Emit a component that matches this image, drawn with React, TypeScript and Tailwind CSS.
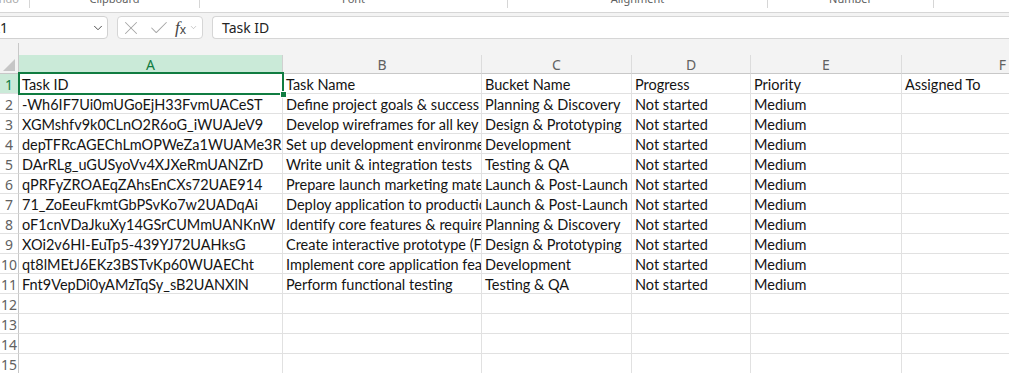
import { Check, ChevronDown, X } from "lucide-react"

const rows = [
  ["Task ID", "Task Name", "Bucket Name", "Progress", "Priority", "Assigned To"],
  ["-Wh6IF7Ui0mUGoEjH33FvmUACeST", "Define project goals & success criteria", "Planning & Discovery", "Not started", "Medium", ""],
  ["XGMshfv9k0CLnO2R6oG_iWUAJeV9", "Develop wireframes for all key screens", "Design & Prototyping", "Not started", "Medium", ""],
  ["depTFRcAGEChLmOPWeZa1WUAMe3R", "Set up development environment", "Development", "Not started", "Medium", ""],
  ["DArRLg_uGUSyoVv4XJXeRmUANZrD", "Write unit & integration tests", "Testing & QA", "Not started", "Medium", ""],
  ["qPRFyZROAEqZAhsEnCXs72UAE914", "Prepare launch marketing materials", "Launch & Post-Launch", "Not started", "Medium", ""],
  ["71_ZoEeuFkmtGbPSvKo7w2UADqAi", "Deploy application to production", "Launch & Post-Launch", "Not started", "Medium", ""],
  ["oF1cnVDaJkuXy14GSrCUMmUANKnW", "Identify core features & requirements", "Planning & Discovery", "Not started", "Medium", ""],
  ["XOi2v6HI-EuTp5-439YJ72UAHksG", "Create interactive prototype (Figma)", "Design & Prototyping", "Not started", "Medium", ""],
  ["qt8lMEtJ6EKz3BSTvKp60WUAECht", "Implement core application features", "Development", "Not started", "Medium", ""],
  ["Fnt9VepDi0yAMzTqSy_sB2UANXlN", "Perform functional testing", "Testing & QA", "Not started", "Medium", ""],
  ["", "", "", "", "", ""],
  ["", "", "", "", "", ""],
  ["", "", "", "", "", ""],
  ["", "", "", "", "", ""],
]

const columns = ["A", "B", "C", "D", "E", "F"]

export default function App() {
  return (
    <div className="w-[1009px] h-[373px] overflow-hidden bg-white font-['Noto_Sans',sans-serif]">
      {/* ribbon group labels, cut off at the top */}
      <div className="flex h-[13px] items-start overflow-hidden border-b border-[#d6d6d6] bg-white text-[11px] leading-[11px] text-[#616161] shadow-[0_1px_2px_rgba(0,0,0,0.08)]">
        <div className="flex w-[29px] justify-end pr-[10px] text-[#a8a8a8]">
          <span className="-mt-[7px]">Undo</span>
        </div>
        <div className="h-[8px] w-px bg-[#d6d6d6]" />
        <div className="flex w-[169px] justify-center">
          <span className="-mt-[7px]">Clipboard</span>
        </div>
        <div className="h-[8px] w-px bg-[#d6d6d6]" />
        <div className="flex w-[307px] justify-center">
          <span className="-mt-[7px]">Font</span>
        </div>
        <div className="h-[8px] w-px bg-[#d6d6d6]" />
        <div className="flex w-[259px] justify-center">
          <span className="-mt-[7px]">Alignment</span>
        </div>
        <div className="h-[8px] w-px bg-[#d6d6d6]" />
        <div className="flex w-[165px] justify-center">
          <span className="-mt-[7px]">Number</span>
        </div>
        <div className="h-[8px] w-px bg-[#d6d6d6]" />
      </div>

      {/* formula bar */}
      <div className="bg-[#f3f3f3]">
        <div className="flex h-[26px] items-start pt-[3px]">
          <div className="-ml-[20px] flex h-[23px] w-[128px] items-center justify-between rounded-[4px] border border-[#d1d1d1] bg-white pl-[10px] pr-[2px] text-[14px] text-[#242424]">
            <span>A1</span>
            <ChevronDown size={14} strokeWidth={1.6} className="text-[#444]" />
          </div>
          <div className="ml-[9px] flex h-[23px] w-[86px] items-center rounded-[4px] border border-[#d6d6d6] bg-white pl-[2px] text-[#a6a6a6]">
            <X size={22} strokeWidth={1.1} />
            <Check size={22} strokeWidth={1.1} className="ml-[6px]" />
            <span className="ml-[5px] flex items-end text-[#444]">
              <span className="font-['Liberation_Serif',serif] text-[17px] italic leading-[16px]">f</span>
              <span className="text-[12px] leading-[12px]">x</span>
            </span>
            <ChevronDown size={9} strokeWidth={1.6} className="ml-[3px] text-[#a6a6a6]" />
          </div>
          <div className="ml-[9px] flex h-[23px] flex-1 items-center rounded-l-[4px] border border-r-0 border-[#d6d6d6] bg-white pl-[9px] text-[14px] text-[#242424]">
            Task ID
          </div>
        </div>
        <div className="flex h-[16px]">
          <div className="mt-[4px] w-[19px] border-r border-[#c8c8c8]" />
        </div>
      </div>

      {/* sheet */}
      <div className="relative">
        <div className="grid grid-cols-[19px_264px_199px_150px_119px_151px_202px]">
          <div className="flex h-[19px] items-end justify-end border-r border-b border-[#c8c8c8] bg-[#f3f3f3] pr-[3px] pb-[2px]">
            <svg width="12" height="12" viewBox="0 0 12 12">
              <polygon points="12,0 12,12 0,12" fill="#c6c6c6" />
            </svg>
          </div>
          {columns.map((col, i) => (
            <div
              key={col}
              className={`flex h-[19px] items-center justify-center border-r border-b text-[14px] ${
                i === 0
                  ? "border-r-[#d0d0d0] border-b-[#107c41] bg-[#caead8] text-[#107c41]"
                  : "border-r-[#dcdcdc] border-b-[#c8c8c8] bg-[#f3f3f3] text-[#616161]"
              }`}
            >
              {col}
            </div>
          ))}

          {rows.map((row, r) => (
            <div key={r} className="contents">
              <div
                className={`flex h-[20px] items-center justify-center border-r border-b border-r-[#c8c8c8] border-b-[#e1e1e1] pt-[1px] text-[14px] ${
                  r === 0 ? "bg-[#caead8] text-[#107c41]" : "bg-white text-[#616161]"
                }`}
              >
                {r + 1}
              </div>
              {row.map((cell, c) => (
                <div
                  key={c}
                  className="flex h-[20px] items-center overflow-hidden whitespace-nowrap border-r border-b border-[#e1e1e1] pt-[2px] pl-[3px] font-['Lato',sans-serif] text-[14.5px] text-[#141414]"
                >
                  {cell}
                </div>
              ))}
            </div>
          ))}
        </div>

        {/* active cell A1 */}
        <div className="absolute left-[18px] top-[17px] h-[23px] w-[266px] border-2 border-[#107c41]" />
        <div className="absolute left-[280px] top-[36px] h-[7px] w-[7px] border border-white bg-[#107c41]" />
      </div>
    </div>
  )
}
